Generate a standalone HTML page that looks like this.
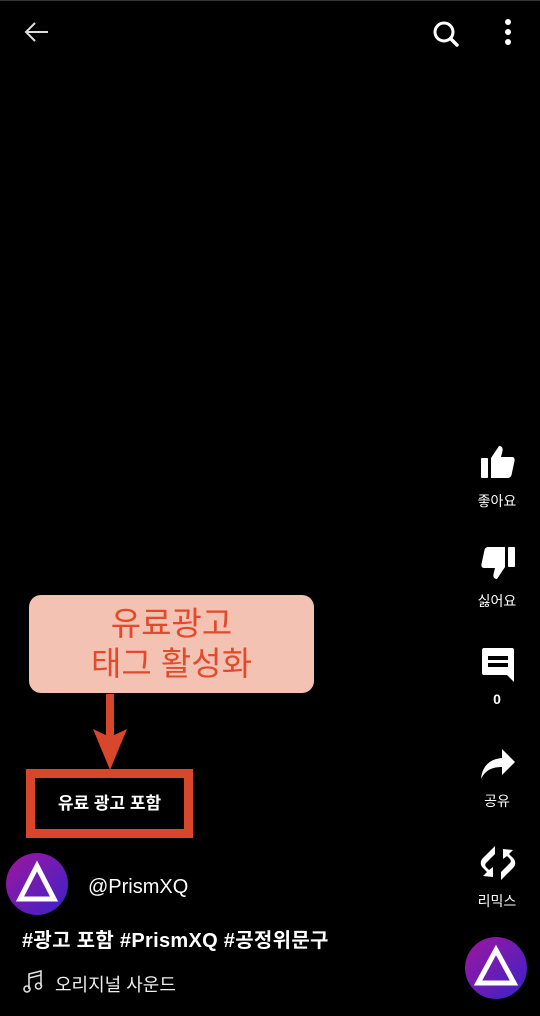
<!DOCTYPE html>
<html><head><meta charset="utf-8">
<style>
*{margin:0;padding:0;box-sizing:border-box}
body{width:540px;height:1016px;background:#000;position:relative;overflow:hidden;font-family:"Liberation Sans","Noto Sans CJK KR",sans-serif;color:#fff}
.a{position:absolute}
.lbl{position:absolute;width:60px;left:467px;text-align:center;font-size:14px;color:#fff}
</style></head><body>
<div class="a" style="left:0;top:0;width:540px;height:1px;background:#333"></div>
<svg class="a" style="left:22px;top:18px" width="30" height="28" viewBox="0 0 30 28"><path d="M26 14H4M13 5L4 14l9 9" fill="none" stroke="#ddd" stroke-width="2"/></svg>
<svg class="a" style="left:428px;top:18px" width="34" height="30" viewBox="0 0 34 30"><circle cx="16" cy="14" r="9" fill="none" stroke="#fff" stroke-width="3"/><path d="M22.5 20.5L29 27" stroke="#fff" stroke-width="3.5" stroke-linecap="round"/></svg>
<svg class="a" style="left:500px;top:18px" width="16" height="30" viewBox="0 0 16 30"><circle cx="8" cy="4" r="3" fill="#fff"/><circle cx="8" cy="14" r="3" fill="#fff"/><circle cx="8" cy="24" r="3" fill="#fff"/></svg>

<svg class="a" style="left:480px;top:445px" width="36" height="34" viewBox="0 0 36 34"><rect x="1" y="13" width="7" height="20" rx="1" fill="#fff"/><path d="M11 13l8-12c3 0 4 2 3.5 5L21 12h11c2 0 3 2 2.5 4l-3 14c-.5 2-2 3-4 3H11z" fill="#fff"/></svg>
<div class="lbl" style="top:491px">좋아요</div>
<svg class="a" style="left:480px;top:546px" width="36" height="34" viewBox="0 0 36 34"><g transform="translate(36,34) rotate(180)"><rect x="1" y="13" width="7" height="20" rx="1" fill="#fff"/><path d="M11 13l8-12c3 0 4 2 3.5 5L21 12h11c2 0 3 2 2.5 4l-3 14c-.5 2-2 3-4 3H11z" fill="#fff"/></g></svg>
<div class="lbl" style="top:591px">싫어요</div>
<svg class="a" style="left:481px;top:647px" width="34" height="36" viewBox="0 0 34 36"><path d="M3 1h28c1.5 0 2 1 2 2v32l-7-7H3c-1.5 0-2-1-2-2V3c0-1.5 1-2 2-2z" fill="#fff"/><rect x="7" y="9" width="20" height="4" fill="#000"/><rect x="7" y="16" width="20" height="4" fill="#000"/></svg>
<div class="lbl" style="top:691px;font-weight:bold">0</div>
<svg class="a" style="left:480px;top:748px" width="36" height="32" viewBox="0 0 36 32"><path d="M22 1l13 13-13 13v-8C11 19 5 23 1 31c1-12 8-20 21-21z" fill="#fff"/></svg>
<div class="lbl" style="top:791px">공유</div>
<svg class="a" style="left:479px;top:845px" width="38" height="36" viewBox="0 0 38 36"><path d="M16 1L4 13c-3 3-3 7 0 10l4 4 -4 4 10 1V22l-4 3-3-3c-1-1-1-3 0-4l9-9z" fill="#fff"/><path d="M22 35l12-12c3-3 3-7 0-10l-4-4 4-4-10-1v10l4-3 3 3c1 1 1 3 0 4l-9 9z" fill="#fff"/></svg>
<div class="lbl" style="top:891px">리믹스</div>

<svg class="a" style="left:465px;top:937px" width="62" height="62" viewBox="0 0 62 62"><defs><linearGradient id="g2" x1="0" y1="0" x2="1" y2="1"><stop offset="0" stop-color="#a0169f"/><stop offset="1" stop-color="#3a22c8"/></linearGradient></defs><circle cx="31" cy="31" r="31" fill="url(#g2)"/><path d="M31 13L13 46h36z" fill="none" stroke="#fff" stroke-width="5"/></svg>

<div class="a" style="left:29px;top:595px;width:285px;height:98px;background:#f4c2b2;border-radius:12px;color:#e14a2c;font-size:33px;line-height:40px;text-align:center;padding-top:9px">유료광고<br>태그 활성화</div>
<svg class="a" style="left:90px;top:694px" width="40" height="78" viewBox="0 0 40 78"><rect x="16" y="0" width="8" height="44" fill="#d8472b"/><path d="M3 35l17 8 17-8-17 41z" fill="#d8472b"/></svg>
<div class="a" style="left:26px;top:769px;width:167px;height:69px;border:9px solid #d8472b;font-size:17px;font-weight:bold;text-align:center;line-height:51px">유료 광고 포함</div>

<svg class="a" style="left:6px;top:853px" width="62" height="62" viewBox="0 0 62 62"><defs><linearGradient id="g1" x1="0" y1="0" x2="1" y2="1"><stop offset="0" stop-color="#a0169f"/><stop offset="1" stop-color="#3a22c8"/></linearGradient></defs><circle cx="31" cy="31" r="31" fill="url(#g1)"/><path d="M31 13L14 46h34z" fill="none" stroke="#fff" stroke-width="5"/></svg>
<div class="a" style="left:88px;top:876px;font-size:20px">@PrismXQ</div>
<div class="a" style="left:22px;top:924px;font-size:20px;font-weight:bold;letter-spacing:0.3px">#광고 포함 #PrismXQ #공정위문구</div>
<svg class="a" style="left:23px;top:970px" width="20" height="24" viewBox="0 0 20 24"><path d="M6 19V4l12-3v15" fill="none" stroke="#ddd" stroke-width="1.6"/><circle cx="4" cy="19" r="3" fill="none" stroke="#ddd" stroke-width="1.6"/><circle cx="15.5" cy="16" r="3" fill="none" stroke="#ddd" stroke-width="1.6"/><path d="M6 8l12-3" stroke="#ddd" stroke-width="1.6"/></svg>
<div class="a" style="left:55px;top:971px;font-size:18px;color:#eee">오리지널 사운드</div>
</body></html>
